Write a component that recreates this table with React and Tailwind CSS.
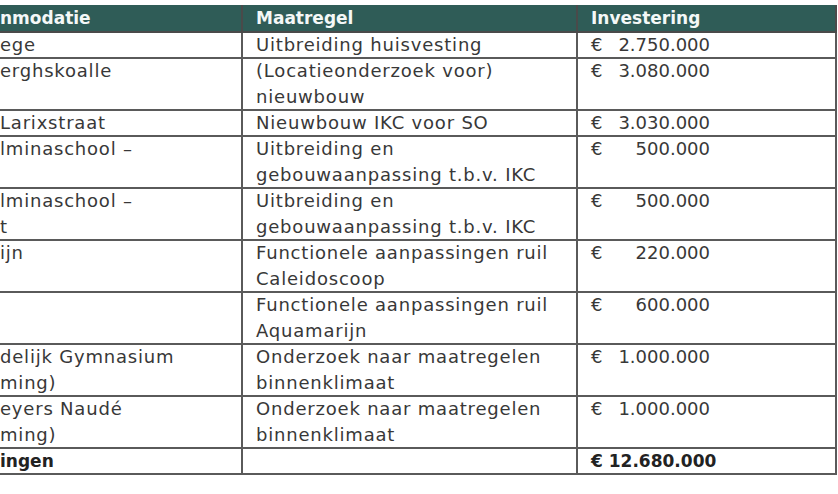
const ROWS = [
  { a: ['ege'], b: ['Uitbreiding huisvesting'], c: '2.750.000' },
  { a: ['erghskoalle'], b: ['(Locatieonderzoek voor)', 'nieuwbouw'], c: '3.080.000' },
  { a: ['Larixstraat'], b: ['Nieuwbouw IKC voor SO'], c: '3.030.000' },
  { a: ['lminaschool –'], b: ['Uitbreiding en', 'gebouwaanpassing t.b.v. IKC'], c: '500.000' },
  { a: ['lminaschool –', 't'], b: ['Uitbreiding en', 'gebouwaanpassing t.b.v. IKC'], c: '500.000' },
  { a: ['ijn'], b: ['Functionele aanpassingen ruil', 'Caleidoscoop'], c: '220.000' },
  { a: [''], b: ['Functionele aanpassingen ruil', 'Aquamarijn'], c: '600.000' },
  { a: ['delijk Gymnasium', 'ming)'], b: ['Onderzoek naar maatregelen', 'binnenklimaat'], c: '1.000.000' },
  { a: ['eyers Naudé', 'ming)'], b: ['Onderzoek naar maatregelen', 'binnenklimaat'], c: '1.000.000' },
];

// first line 24px, following lines 26px, so rows come out at 26 / 52 with the 2px border
const Lines = ({ lines }) => (
  <div>
    {lines.map((l, i) => (
      <div key={i} className={`${i === 0 ? 'h-[24px] leading-[24px]' : 'h-[26px] leading-[28px]'} whitespace-nowrap`}>{l || '\u00a0'}</div>
    ))}
  </div>
);

export default function App() {
  return (
    <div className="w-[838px] h-[494px] overflow-hidden bg-white pt-[5px] text-[#383838] text-[18px] tracking-[0.8px]"
      style={{ fontFamily: '"DejaVu Sans", sans-serif' }}>
      <table className="border-collapse table-fixed w-[836px]">
        <colgroup>
          <col className="w-[242px]" />
          <col className="w-[335px]" />
          <col className="w-[259px]" />
        </colgroup>
        <thead>
          <tr className="bg-[#2f5c57] text-[#f4f8f7] text-[17px] tracking-normal h-[27px] leading-[24px]">
            <th className="text-left font-bold p-0 border-b-2 border-[#4a4a4a]">nmodatie</th>
            <th className="text-left font-bold pl-[13px] py-0 border-l-2 border-b-2 border-[#4a4a4a]">Maatregel</th>
            <th className="text-left font-bold pl-[13px] py-0 border-l-2 border-r-2 border-b-2 border-[#4a4a4a]">Investering</th>
          </tr>
        </thead>
        <tbody>
          {ROWS.map((r, i) => (
            <tr key={i} className="align-top">
              <td className="p-0 border-b-2 border-[#5a5a5a]"><Lines lines={r.a} /></td>
              <td className="pl-[13px] py-0 border-l-2 border-b-2 border-[#5a5a5a]"><Lines lines={r.b} /></td>
              <td className="pl-[13px] py-0 border-l-2 border-r-2 border-b-2 border-[#5a5a5a]">
                <div className="flex h-[24px] leading-[24px] w-[119px] tracking-normal">
                  <span>€</span>
                  <span className="flex-1 text-right">{r.c}</span>
                </div>
              </td>
            </tr>
          ))}
          <tr className="align-top font-bold text-[#222] text-[17px] tracking-normal">
            <td className="p-0 border-b-2 border-[#5a5a5a]"><Lines lines={['ingen']} /></td>
            <td className="pl-[13px] py-0 border-l-2 border-b-2 border-[#5a5a5a]"><Lines lines={['']} /></td>
            <td className="pl-[13px] py-0 border-l-2 border-r-2 border-b-2 border-[#5a5a5a]">
              <div className="h-[24px] leading-[24px] whitespace-nowrap">€ 12.680.000</div>
            </td>
          </tr>
        </tbody>
      </table>
    </div>
  );
}
